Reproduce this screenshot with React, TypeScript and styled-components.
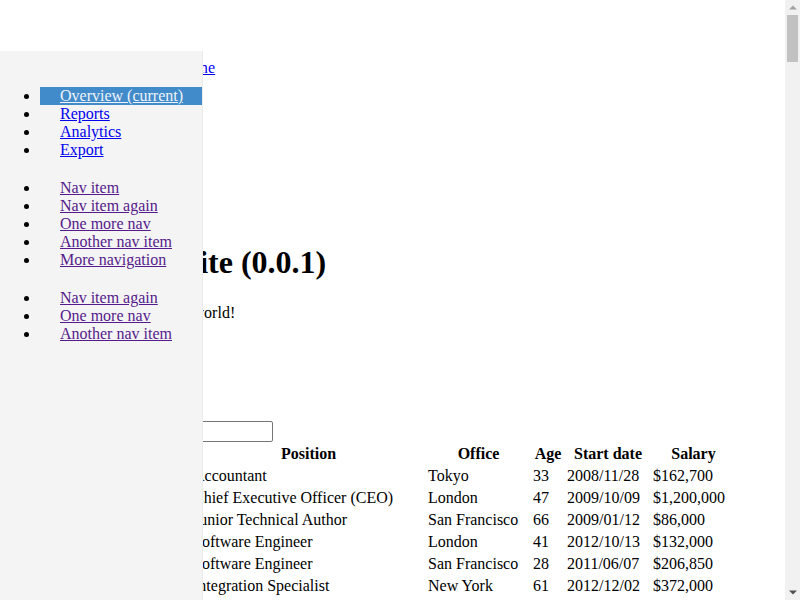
import React from 'react'
import styled, { createGlobalStyle } from 'styled-components'

type Employee = {
  name: string;
  position: string;
  office: string;
  age: number;
  start: string;
  salary: string;
}

const employees: Employee[] = [
  { name: 'Airi Satou', position: 'Accountant', office: 'Tokyo', age: 33, start: '2008/11/28', salary: '$162,700' },
  { name: 'Angelica Ramos', position: 'Chief Executive Officer (CEO)', office: 'London', age: 47, start: '2009/10/09', salary: '$1,200,000' },
  { name: 'Ashton Cox', position: 'Junior Technical Author', office: 'San Francisco', age: 66, start: '2009/01/12', salary: '$86,000' },
  { name: 'Bradley Greer', position: 'Software Engineer', office: 'London', age: 41, start: '2012/10/13', salary: '$132,000' },
  { name: 'Brenden Wagner', position: 'Software Engineer', office: 'San Francisco', age: 28, start: '2011/06/07', salary: '$206,850' },
  { name: 'Brielle Williamson', position: 'Integration Specialist', office: 'New York', age: 61, start: '2012/12/02', salary: '$372,000' },
  { name: 'Bruno Nash', position: 'Software Engineer', office: 'London', age: 38, start: '2011/05/03', salary: '$163,500' },
  { name: 'Caesar Vance', position: 'Pre-Sales Support', office: 'New York', age: 21, start: '2011/12/12', salary: '$106,450' },
  { name: 'Cara Stevens', position: 'Sales Assistant', office: 'New York', age: 46, start: '2011/12/06', salary: '$145,600' },
  { name: 'Cedric Kelly', position: 'Senior Javascript Developer', office: 'Edinburgh', age: 22, start: '2012/03/29', salary: '$433,060' },
]

const navGroups = [
  { visited: false, items: ['Overview (current)', 'Reports', 'Analytics', 'Export'] },
  { visited: true, items: ['Nav item', 'Nav item again', 'One more nav', 'Another nav item', 'More navigation'] },
  { visited: true, items: ['Nav item again', 'One more nav', 'Another nav item'] },
]

const GlobalStyle = createGlobalStyle`
  html, body {
    margin: 0;
    padding: 0;
    background: #fff;
    overflow: hidden;
  }
  body {
    font-family: "Liberation Serif", "Times New Roman", serif;
    font-size: 16px;
    color: #000;
  }
`

// classic grey scrollbar rail, drawn over the right edge of the page
const ScrollRail = styled.div`
  position: fixed;
  top: 0;
  right: 0;
  bottom: 0;
  width: 15px;
  display: flex;
  flex-direction: column;
  background: #f1f1f1;
  z-index: 20;
`
const RailButton = styled.div`
  height: 15px;
  display: flex;
  align-items: center;
  justify-content: center;
  flex-shrink: 0;
`
const RailThumb = styled.div`
  height: 47px;
  margin: 0 2px;
  background: #c1c1c1;
`
const RailTrack = styled.div`
  flex: 1;
`

const Sidebar = styled.aside`
  position: fixed;
  top: 51px;
  left: 0;
  bottom: 0;
  width: 202px;
  padding-top: 36px;
  background: #f4f4f4;
  border-right: 1px solid #ebebeb;
  z-index: 10;
`
const NavList = styled.ul`
  margin: 0 0 20px;
  padding: 0 0 0 40px;
  list-style: disc;
`
const NavItem = styled.li<{ $active?: boolean }>`
  line-height: 18px;
  background: ${p => (p.$active ? '#428bca' : 'transparent')};
`
const NavLink = styled.a<{ $visited?: boolean; $active?: boolean }>`
  display: block;
  padding-left: 20px;
  color: ${p => (p.$active ? '#eef3f9' : p.$visited ? '#551a8b' : '#0000ee')};
  text-decoration: underline;
`

const Main = styled.main`
  padding: 59px 23px 0 8px;
  min-height: 8141px;
`
const Crumbs = styled.nav`
  line-height: 18px;
  padding-left: 168px;
  margin-bottom: 167px;
  a {
    color: #0000ee;
  }
`
const Title = styled.h1`
  margin: 0 0 23px;
  padding-left: 115px;
  font-size: 32px;
  line-height: 37px;
  font-weight: bold;
`
const Lead = styled.p`
  margin: 0;
  padding-left: 141px;
  line-height: 18px;
`
const Controls = styled.div`
  display: flex;
  flex-direction: column;
  gap: 18px;
  margin-top: 61px;
`
const ControlRow = styled.label<{ $indent: number }>`
  display: flex;
  align-items: flex-start;
  gap: 4px;
  height: 20px;
  line-height: 20px;
  padding-left: ${p => p.$indent}px;
`
const Select = styled.select`
  font-family: "Liberation Sans", Arial, sans-serif;
  font-size: 13.33px;
  height: 20px;
`
const SearchInput = styled.input`
  box-sizing: border-box;
  width: 154px;
  height: 21px;
  padding: 1px 2px;
  border: 1px solid #767676;
  border-radius: 2px;
  font-family: "Liberation Sans", Arial, sans-serif;
  font-size: 13.33px;
  background: #fff;
`

const Table = styled.table`
  margin-top: 1px;
  border-collapse: separate;
  border-spacing: 2px;
  line-height: 18px;
`
const Th = styled.th<{ $w: number }>`
  width: ${p => p.$w}px;
  padding: 1px;
  font-weight: bold;
  text-align: center;
`
const Td = styled.td`
  padding: 1px;
  text-align: left;
  white-space: nowrap;
`
const Info = styled.div`
  line-height: 18px;
  margin-top: 4px;
`
const Pager = styled.div`
  display: flex;
  gap: 8px;
  line-height: 18px;
  a {
    color: #0000ee;
  }
`

const columns = [
  { label: 'Name', w: 178 },
  { label: 'Position', w: 231 },
  { label: 'Office', w: 101 },
  { label: 'Age', w: 30 },
  { label: 'Start date', w: 82 },
  { label: 'Salary', w: 81 },
]

const Arrow = ({ up, color }: { up?: boolean; color: string }) => (
  <svg width="8" height="5" viewBox="0 0 8 5">
    <polygon points={up ? '0,4.5 4,0.5 8,4.5' : '0,0.5 8,0.5 4,4.5'} fill={color} />
  </svg>
)

const App = () => {
  return (
    <>
      <GlobalStyle />
      <Sidebar>
        {navGroups.map((group, gi) => (
          <NavList key={gi}>
            {group.items.map((item, ii) => {
              const active = gi === 0 && ii === 0
              return (
                <NavItem key={item + ii} $active={active}>
                  <NavLink href="#" $visited={group.visited} $active={active}>{item}</NavLink>
                </NavItem>
              )
            })}
          </NavList>
        ))}
      </Sidebar>
      <ScrollRail aria-hidden="true">
        <RailButton><Arrow up color="#a3a3a3" /></RailButton>
        <RailThumb />
        <RailTrack />
        <RailButton><Arrow color="#505050" /></RailButton>
      </ScrollRail>
      <Main>
        <Crumbs>
          <a href="#">Home</a>
        </Crumbs>
        <Title>Test site (0.0.1)</Title>
        <Lead>Hello, world!</Lead>
        <Controls>
          <ControlRow $indent={0}>
            Show
            <Select defaultValue="10">
              <option>10</option>
              <option>25</option>
              <option>50</option>
              <option>100</option>
            </Select>
            entries
          </ControlRow>
          <ControlRow $indent={59}>
            Search:
            <SearchInput type="search" />
          </ControlRow>
        </Controls>
        <Table>
          <thead>
            <tr>
              {columns.map(c => (
                <Th key={c.label} $w={c.w}>{c.label}</Th>
              ))}
            </tr>
          </thead>
          <tbody>
            {employees.map(e => (
              <tr key={e.name}>
                <Td>{e.name}</Td>
                <Td>{e.position}</Td>
                <Td>{e.office}</Td>
                <Td>{e.age}</Td>
                <Td>{e.start}</Td>
                <Td>{e.salary}</Td>
              </tr>
            ))}
          </tbody>
        </Table>
        <Info>Showing 1 to 10 of 57 entries</Info>
        <Pager>
          <a href="#">Previous</a>
          <a href="#">1</a>
          <a href="#">2</a>
          <a href="#">3</a>
          <a href="#">4</a>
          <a href="#">5</a>
          <a href="#">6</a>
          <a href="#">Next</a>
        </Pager>
      </Main>
    </>
  )
}

export default App
